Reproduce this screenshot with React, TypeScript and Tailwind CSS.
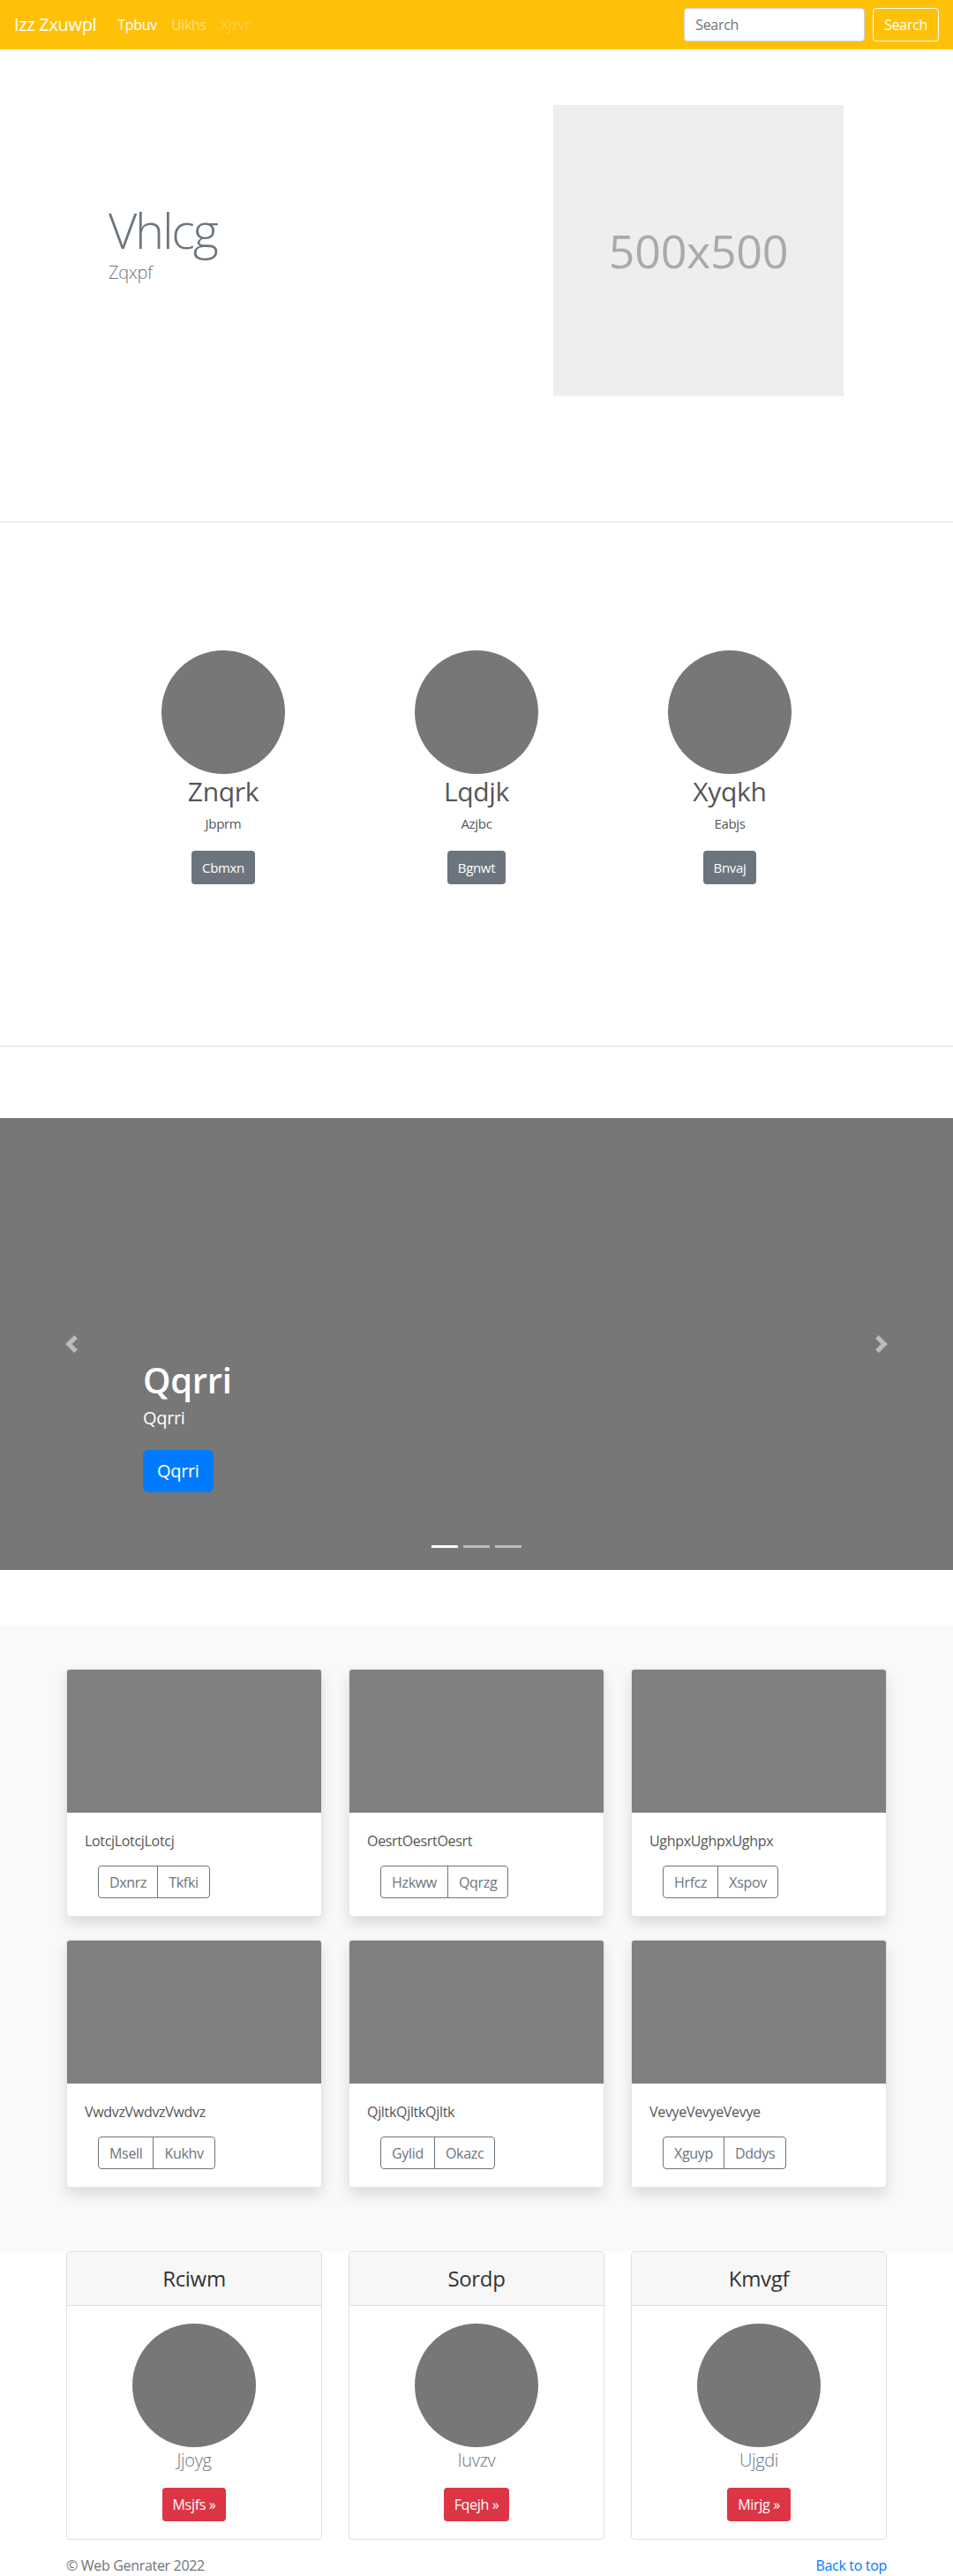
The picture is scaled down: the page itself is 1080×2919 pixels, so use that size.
import React from 'react';

const team = [
    { name: 'Znqrk', role: 'Jbprm', action: 'Cbmxn' },
    { name: 'Lqdjk', role: 'Azjbc', action: 'Bgnwt' },
    { name: 'Xyqkh', role: 'Eabjs', action: 'Bnvaj' },
];

const albums = [
    { text: 'LotcjLotcjLotcj', a: 'Dxnrz', b: 'Tkfki' },
    { text: 'OesrtOesrtOesrt', a: 'Hzkww', b: 'Qqrzg' },
    { text: 'UghpxUghpxUghpx', a: 'Hrfcz', b: 'Xspov' },
    { text: 'VwdvzVwdvzVwdvz', a: 'Msell', b: 'Kukhv' },
    { text: 'QjltkQjltkQjltk', a: 'Gylid', b: 'Okazc' },
    { text: 'VevyeVevyeVevye', a: 'Xguyp', b: 'Dddys' },
];

const plans = [
    { title: 'Rciwm', sub: 'Jjoyg', action: 'Msjfs' },
    { title: 'Sordp', sub: 'Iuvzv', action: 'Fqejh' },
    { title: 'Kmvgf', sub: 'Ujgdi', action: 'Mirjg' },
];

const Chevron = ({ dir }: { dir: 'left' | 'right' }) => (
    <svg viewBox="0 0 8 8" className="w-5 h-5" fill="rgba(255,255,255,0.5)">
        {dir === 'left'
            ? <path d="M5.25 0l-4 4 4 4 1.5-1.5L4.25 4l2.5-2.5L5.25 0z" />
            : <path d="M2.75 0l-1.5 1.5L3.75 4l-2.5 2.5L2.75 8l4-4-4-4z" />}
    </svg>
);

export default function App() {
    return (
        <div className="w-[1080px] bg-white text-[#212529] tracking-[-0.02em]" style={{ fontFamily: '"Open Sans", "Noto Sans", sans-serif' }}>
            {/* Navbar */}
            <nav className="h-[56px] bg-[#ffc107] px-4 flex items-center">
                <span className="text-[20px] text-white mr-4">Izz Zxuwpl</span>
                <div className="flex text-[16px]">
                    <span className="px-2 text-white">Tpbuv</span>
                    <span className="px-2 text-white/50">Uikhs</span>
                    <span className="px-2 text-white/25">Xjzvr</span>
                </div>
                <div className="ml-auto flex items-center gap-[9px]">
                    <input
                        placeholder="Search"
                        className="w-[205px] h-[38px] rounded border border-[#ced4da] bg-white px-3 text-[16px] placeholder:text-[#6c757d] outline-none"
                    />
                    <button className="h-[38px] px-3 rounded border border-white text-white text-[16px]">Search</button>
                </div>
            </nav>

            {/* Hero */}
            <section className="pt-[63px] pb-[142px] border-b border-[#dee2e6] flex">
                <div className="w-[627px] pl-[123px] pt-[108px]">
                    <h1 className="text-[56px] font-light leading-[1.2] tracking-[-0.04em] text-[#6c757d]">Vhlcg</h1>
                    <p className="text-[20px] font-light leading-[30px] text-[#6c757d]">Zqxpf</p>
                </div>
                <div className="w-[329px] h-[330px] bg-[#eeeeee] flex items-center justify-center">
                    <span className="text-[52px] text-[#aaaaaa]">500x500</span>
                </div>
            </section>

            {/* Team */}
            <section className="pt-[145px] pb-[183px] border-b border-[#dee2e6]">
                <div className="w-[861px] mx-auto grid grid-cols-3">
                    {team.map((t) => (
                        <div key={t.name} className="flex flex-col items-center">
                            <div className="w-[140px] h-[140px] rounded-full bg-[#777777]" />
                            <h2 className="text-[30px] leading-[1.2] text-[#555555] mt-[2px] mb-2">{t.name}</h2>
                            <p className="text-[15px] leading-[21px] text-[#555555] mb-[20px]">{t.role}</p>
                            <button className="h-[38px] px-3 rounded bg-[#6c757d] text-white text-[15px]">{t.action}</button>
                        </div>
                    ))}
                </div>
            </section>

            {/* Carousel */}
            <section className="mt-[81px] h-[512px] bg-[#777777] relative">
                <div className="absolute left-0 top-0 bottom-0 w-[15%] flex items-center justify-center">
                    <Chevron dir="left" />
                </div>
                <div className="absolute right-0 top-0 bottom-0 w-[15%] flex items-center justify-center">
                    <Chevron dir="right" />
                </div>
                <div className="absolute left-[162px] bottom-[88px] text-white">
                    <h2 className="text-[40px] font-semibold leading-[1.2] mb-[4px]">Qqrri</h2>
                    <p className="text-[20px] leading-[30px] mb-[21px]">Qqrri</p>
                    <button className="h-[48px] px-4 rounded-md bg-[#007bff] text-white text-[20px]">Qqrri</button>
                </div>
                <div className="absolute bottom-[25px] left-0 right-0 flex justify-center gap-[6px]">
                    <span className="w-[30px] h-[3px] bg-white" />
                    <span className="w-[30px] h-[3px] bg-white/50" />
                    <span className="w-[30px] h-[3px] bg-white/50" />
                </div>
            </section>

            {/* Album */}
            <section className="mt-16 bg-[#f8f9fa] pt-12 pb-[72px]">
                <div className="w-[930px] mx-auto grid grid-cols-3 gap-x-[30px] gap-y-[26px]">
                    {albums.map((c) => (
                        <div key={c.text} className="bg-white rounded border border-black/10 shadow-[0_8px_16px_rgba(0,0,0,0.12)] overflow-hidden">
                            <div className="h-[162px] bg-[#808080]" />
                            <div className="p-5">
                                <p className="text-[16px] leading-6 mb-4 text-[#555555]">{c.text}</p>
                                <div className="ml-[15px] inline-flex rounded border border-[#6c757d] text-[#6c757d] text-[16px]">
                                    <span className="h-[35px] px-3 flex items-center border-r border-[#6c757d]">{c.a}</span>
                                    <span className="h-[35px] px-3 flex items-center">{c.b}</span>
                                </div>
                            </div>
                        </div>
                    ))}
                </div>
            </section>

            {/* Plans */}
            <section className="w-[930px] mx-auto grid grid-cols-3 gap-x-[30px]">
                {plans.map((p) => (
                    <div key={p.title} className="rounded border border-[#dfdfdf] overflow-hidden">
                        <div className="h-[61px] bg-[#f7f7f7] border-b border-[#dfdfdf] flex items-center justify-center">
                            <h4 className="text-[24px] font-medium text-[#333333]">{p.title}</h4>
                        </div>
                        <div className="p-5 flex flex-col items-center">
                            <div className="w-[140px] h-[140px] rounded-full bg-[#777777]" />
                            <p className="text-[20px] font-light leading-[30px] text-[#6c757d] mb-4">{p.sub}</p>
                            <button className="h-[38px] px-3 rounded bg-[#dc3545] text-white text-[16px]">{p.action} »</button>
                        </div>
                    </div>
                ))}
            </section>

            {/* Footer */}
            <footer className="w-[930px] mx-auto pt-[17px] flex justify-between text-[16px] leading-6">
                <span className="text-[#6c757d]">© Web Genrater 2022</span>
                <span className="text-[#007bff]">Back to top</span>
            </footer>
        </div>
    );
}
